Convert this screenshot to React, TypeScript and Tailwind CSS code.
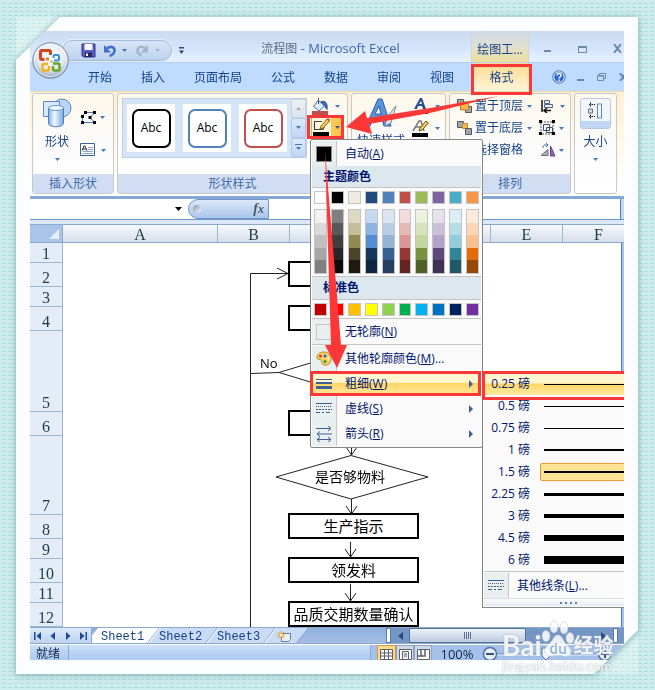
import React from "react";

const themeColumns = [
  ["#ffffff", "#f2f2f2", "#d9d9d9", "#bfbfbf", "#a6a6a6", "#7f7f7f"],
  ["#000000", "#7f7f7f", "#595959", "#3f3f3f", "#262626", "#0c0c0c"],
  ["#eeece1", "#ddd9c3", "#c4bd97", "#938953", "#494429", "#1d1b10"],
  ["#1f497d", "#c6d9f0", "#8db3e2", "#548dd4", "#17365d", "#0f243e"],
  ["#4f81bd", "#dbe5f1", "#b8cce4", "#95b3d7", "#366092", "#244061"],
  ["#c0504d", "#f2dcdb", "#e5b9b7", "#d99694", "#953734", "#632423"],
  ["#9bbb59", "#ebf1dd", "#d7e3bc", "#c3d69b", "#76923c", "#4f6128"],
  ["#8064a2", "#e5e0ec", "#ccc1d9", "#b2a2c7", "#5f497a", "#3f3151"],
  ["#4bacc6", "#dbeef3", "#b7dde8", "#92cddc", "#31859b", "#205867"],
  ["#f79646", "#fdeada", "#fbd5b5", "#fac08f", "#e36c09", "#974806"],
];
const standardColors = ["#c00000", "#ff0000", "#ffc000", "#ffff00", "#92d050", "#00b050", "#00b0f0", "#0070c0", "#002060", "#7030a0"];

const rows = [
  { n: 1, h: 20 }, { n: 2, h: 24 }, { n: 3, h: 20 }, { n: 4, h: 24 },
  { n: 5, h: 81 }, { n: 6, h: 24 }, { n: 7, h: 79 }, { n: 8, h: 24 },
  { n: 9, h: 20 }, { n: 10, h: 24 }, { n: 11, h: 20 }, { n: 12, h: 24 },
];

const weights = [
  { label: "0.25 磅", px: 1 }, { label: "0.5 磅", px: 1 }, { label: "0.75 磅", px: 1 },
  { label: "1 磅", px: 2 }, { label: "1.5 磅", px: 2 }, { label: "2.25 磅", px: 3 },
  { label: "3 磅", px: 4 }, { label: "4.5 磅", px: 6 }, { label: "6 磅", px: 8 },
];

function Caret({ color = "#4a78b5" }: { color?: string }) {
  return (
    <svg width="5" height="3" viewBox="0 0 5 3" className="shrink-0" aria-hidden="true">
      <path d="M0 0h5L2.500 3z" fill={color} />
    </svg>
  );
}

function OfficeButton() {
  return (
    <button aria-label="Office 按钮" className="absolute top-[11px] left-[2px] z-10 h-[37px] w-[37px]">
      <svg width="37" height="37" viewBox="0 0 37 37">
        <defs>
          <radialGradient id="orb" cx="50%" cy="35%" r="65%">
            <stop offset="0" stopColor="#ffffff" />
            <stop offset="0.65" stopColor="#e3e8f0" />
            <stop offset="1" stopColor="#8e9db5" />
          </radialGradient>
        </defs>
        <circle cx="18.5" cy="18.5" r="17.8" fill="url(#orb)" stroke="#7f8fa9" />
        <circle cx="18.5" cy="18.5" r="16.2" fill="none" stroke="#f6f8fb" strokeOpacity=".8" />
        <g fill="none">
          <path d="M12.500 17.500H10q-1.500 0-1.500-1.500V10q0-1.500 1.500-1.500h7q1.500 0 1.500 1.500v3" stroke="#d5441c" strokeWidth="3" />
          <path d="M22 18.500h3.500q1.500 0 1.500-1.500v-2.500q0-1.500-1.500-1.500H23q-1.500 0-1.500 1.500V16" stroke="#3b8edb" strokeWidth="2" />
          <path d="M16 22h-4q-1.500 0-1.500 1.500V27q0 1.500 1.500 1.500h3.500q1.500 0 1.500-1.500v-3" stroke="#f0b01e" strokeWidth="2.400" />
          <path d="M21 21.500h5q1.500 0 1.500 1.500v4q0 1.500-1.500 1.500h-3.500q-1.500 0-1.500-1.500v-3" stroke="#6aa728" strokeWidth="2.600" />
        </g>
        <path d="M14 15.500h3v3h-3z" fill="#ef7b2d" />
        <path d="M18.500 18.500h2v2h-2z" fill="#f29b3a" />
      </svg>
    </button>
  );
}

function TitleBar() {
  return (
    <header className="flex h-8 items-stretch border-b border-[#b4cef2] bg-linear-to-b from-[#ccdbf0] via-[#d3e3fa] to-[#e8f2ff]">
      <div className="flex w-[160px] shrink-0 items-center pt-[8px] pl-[32px]">
        <div className="flex h-[21px] w-[110px] items-center rounded-r-full rounded-tl-full border border-[#a3bbdb] bg-linear-to-b from-[#d7e5f7] to-[#bed2ee] pl-[18px] shadow-[0_0_0_1px_#e5effc]">
          <button aria-label="保存">
            <svg width="15" height="15" viewBox="0 0 15 15">
              <path d="M1 1h13v13H2.500L1 12.500z" fill="#5a5cc4" stroke="#32348e" />
              <path d="M3.500 1h8v6h-8z" fill="#f6f8ff" />
              <path d="M4 9.500h7V14H4z" fill="#23265e" />
              <path d="M5 10.500h2V13H5z" fill="#fff" />
            </svg>
          </button>
          <button aria-label="撤消" className="ml-[7px] flex items-center gap-[5px]">
            <svg width="14" height="14" viewBox="0 0 14 14">
              <path d="M3 5C6 2 11 2 11.500 6c.3 3-2 5-5 6" fill="none" stroke="#3f72c9" strokeWidth="2.600" />
              <path d="M1 1v7.500h7z" fill="#3f72c9" />
            </svg>
            <Caret />
          </button>
          <button aria-label="恢复" className="ml-[8px] flex items-center gap-[6px]">
            <svg width="14" height="14" viewBox="0 0 14 14">
              <path d="M11 5C8 2 3 2 2.500 6c-.3 3 1 4 4 5.500" fill="none" stroke="#a3b4cd" strokeWidth="2.400" />
              <path d="M13 1v7.500H6z" fill="#a3b4cd" />
            </svg>
            <Caret color="#a9b5c6" />
          </button>
        </div>
        <button aria-label="自定义快速访问工具栏" className="ml-[7px] shrink-0">
          <svg width="5" height="7" viewBox="0 0 5 7"><path d="M0 0h5v1.500H0zM0 3.500h5L2.500 7z" fill="#2b4878" /></svg>
        </button>
      </div>
      <h1 className="flex-1 pt-[9px] text-center text-[13px] leading-4 text-[#3e6aaa]">
        <span className="text-xs leading-4 text-[#5d6d84]">流程图</span> - Microsoft Excel
      </h1>
      <div className="w-[58px] shrink-0 border-x border-[#d5d6ce] bg-linear-to-b from-[#d0dcea] via-[#e0dfd0] to-[#efdf9b] pt-[11px] text-center text-xs leading-4 text-[#15428b]">绘图工...</div>
      <div className="flex w-[95px] shrink-0 pt-[9px] text-[#7288a8]">
        <button aria-label="最小化" className="flex w-[36px] shrink-0 justify-center pt-[10px]"><span className="h-0.5 w-[7px] bg-[#7288a8]" /></button>
        <button aria-label="最大化" className="flex w-[35px] shrink-0 justify-center pt-[6px]"><span className="h-[7px] w-[9px] border border-t-2 border-[#7288a8]" /></button>
        <button aria-label="关闭" className="flex w-[35px] shrink-0 justify-center pt-[4px]">
          <svg width="9" height="9" viewBox="0 0 9 9"><path d="M1 0l7 9M8 0L1 9" stroke="#6f87a9" strokeWidth="2" /></svg>
        </button>
      </div>
    </header>
  );
}

function RibbonTabs() {
  return (
    <nav className="flex h-7 items-stretch bg-[#bfdbff] pl-[58px] text-xs leading-4 text-[#15428b]">
      <div className="flex gap-[29px] pt-px">
        {["开始", "插入", "页面布局", "公式", "数据", "审阅", "视图"].map((t) => (
          <button key={t}>{t}</button>
        ))}
      </div>
      <button className="ml-[19px] w-[57px] rounded-t-sm bg-linear-to-b from-[#fbd98c] to-[#fff5d9] pt-px">格式</button>
      <div className="ml-auto flex w-[72px] shrink-0 items-center">
        <button aria-label="帮助" className="mr-[11px] shrink-0">
          <svg width="14" height="14" viewBox="0 0 14 14">
            <circle cx="7" cy="7" r="6.300" fill="#2b66cf" stroke="#6b8fc5" />
            <circle cx="7" cy="7" r="5.200" fill="none" stroke="#e9f2ff" />
            <path d="M5 5.500c0-2.700 4-2.500 4 0C9 7 7 7 7 8.500M7 9.500v1.500" fill="none" stroke="#fff" strokeWidth="1.500" />
          </svg>
        </button>
        <button aria-label="最小化窗口" className="mr-[13px] flex h-[7px] w-[7px] shrink-0 items-end"><span className="h-0.5 w-full bg-[#7288a8]" /></button>
        <button aria-label="还原窗口" className="mr-[13px] shrink-0">
          <svg width="9" height="8" viewBox="0 0 9 8"><path d="M2.500 2V.5h6v5H7M.5 2.500h6v5h-6zM.5 3h6" fill="none" stroke="#7288a8" /></svg>
        </button>
        <button aria-label="关闭窗口" className="shrink-0">
          <svg width="8" height="8" viewBox="0 0 8 8"><path d="M1 0l6 8M7 0L1 8" stroke="#6f87a9" strokeWidth="2" /></svg>
        </button>
      </div>
    </nav>
  );
}

function Group({ width, label, children }: { width: string; label?: string; children: React.ReactNode }) {
  return (
    <section className={`${width} flex h-[101px] shrink-0 flex-col overflow-hidden rounded-[3px] border border-[#c5c9ce] bg-linear-to-b from-[#fef8ea] via-[#fbfbfb] to-[#ffffff]`}>
      <div className="min-h-0 flex-1">{children}</div>
      {label !== undefined && (
        <h2 className="h-[19px] shrink-0 bg-linear-to-b from-[#d3def0] to-[#d0ddf4] text-center text-xs leading-[19px] text-[#3e6aaa]">{label}</h2>
      )}
    </section>
  );
}

function ArrangeIcon({ back }: { back?: boolean }) {
  return (
    <svg width="15" height="14" viewBox="0 0 15 14" aria-hidden="true">
      <path d="M.5.5h6v6h-6z" fill="#a3a7ad" stroke="#55595f" />
      {back && <path d="M5.500 2.500h5v5h-5z" fill="#f0b74c" stroke="#c98b23" />}
      <path d="M8.500 7.500h6v6h-6z" fill="#a3a7ad" stroke="#55595f" />
      {!back && <path d="M3.500 3h8v8h-8z" fill="#f6b746" stroke="#b98026" />}
    </svg>
  );
}

function Ribbon() {
  const styles = [
    { name: "黑色", cls: "border-black" },
    { name: "蓝色", cls: "border-[#4f81bd]" },
    { name: "红色", cls: "border-[#c0504d]" },
  ];
  return (
    <div className="flex h-[105px] gap-[3px] overflow-hidden border-t border-[#f0d9ae] bg-linear-to-b from-[#fff0d2] to-[#ffffff] pt-px pl-0.5 text-xs leading-4 text-[#15428b]">
      <Group width="w-[82px]" label="插入形状">
        <div className="flex pt-[4px] pl-[8px]">
          <button className="flex w-[32px] flex-col items-center">
            <svg width="30" height="30" viewBox="0 0 30 30">
              <defs>
                <linearGradient id="shape" x1="0" x2="1"><stop offset="0" stopColor="#82b1e4" /><stop offset=".4" stopColor="#f1f8ff" /><stop offset="1" stopColor="#76a8e0" /></linearGradient>
              </defs>
              <circle cx="20" cy="10" r="9" fill="#b8d5f5" stroke="#5a87bd" />
              <path d="M1.500 3.500h16v15h-16z" fill="#d9e9fb" stroke="#5a87bd" />
              <path d="M6.500 10v15c0 5 15 5 15 0V10" fill="url(#shape)" stroke="#4d7db9" />
              <ellipse cx="14" cy="10" rx="7.500" ry="2.500" fill="#edf6ff" stroke="#6b97cb" />
            </svg>
            <span className="mt-[6px]">形状</span>
            <span className="mt-[8px]"><Caret /></span>
          </button>
          <div className="ml-[7px] flex flex-col gap-[18px] pt-[12px]">
            <button aria-label="编辑形状" className="flex items-center gap-[3px]">
              <svg width="17" height="15" viewBox="0 0 17 15">
                <path d="M5.500 2.500h9L10 8l5 4.500H2.500V6z" fill="#fff" stroke="#4a78b5" />
                <path d="M4 1h3v3H4zM13 1h3v3h-3zM8.500 6h3v3h-3zM13 11h3v3h-3zM1 11h3v3H1zM1 5h3v3H1z" />
              </svg>
              <Caret />
            </button>
            <button aria-label="文本框" className="flex items-center gap-[5px]">
              <svg width="16" height="14" viewBox="0 0 16 14">
                <path d="M.5.500h14v12H.5z" fill="#fff" stroke="#3b6392" />
                <path d="M2 7.500L4 3h1l2 4.500M3 6h3" fill="none" stroke="#222" />
                <path d="M8 4.500h5M8 6.500h5M2.500 8.500H13M2.500 10.500H13" stroke="#86a7d5" />
              </svg>
              <Caret />
            </button>
          </div>
        </div>
      </Group>

      <Group width="w-[231px]" label="形状样式">
        <div className="flex pt-[4px] pl-[4px]">
          <div className="flex h-[60px] border border-[#b8cee9] bg-[#d5e5f8]">
            <div className="flex gap-[8px] px-[4px] pt-[5px]">
              {styles.map((s) => (
                <button key={s.name} aria-label={`Abc ${s.name}`} className="flex h-12 w-12 items-center justify-center bg-white">
                  <span className={`flex h-[39px] w-[39px] items-center justify-center rounded-[7px] border-2 text-black ${s.cls}`}>Abc</span>
                </button>
              ))}
            </div>
            <div className="flex w-[15px] flex-col">
              <button aria-label="上一行" className="flex flex-1 items-center justify-center border border-[#cbd3dc] bg-linear-to-b from-[#eef1f5] to-[#dce3eb]"><span className="rotate-180"><Caret color="#a6adb6" /></span></button>
              <button aria-label="下一行" className="flex flex-1 items-center justify-center rounded-xs border border-[#b1c8e8] bg-linear-to-b from-[#dbe9fb] to-[#c1d7f5]"><Caret /></button>
              <button aria-label="其他" className="flex flex-1 items-center justify-center rounded-xs border border-[#b1c8e8] bg-linear-to-b from-[#dbe9fb] to-[#c1d7f5]">
                <svg width="7" height="6" viewBox="0 0 7 6"><path d="M0 0h7v1H0zM1 3h5L3.500 6z" fill="#4a78b5" /></svg>
              </button>
            </div>
          </div>
          <div className="ml-[4px] flex flex-col gap-[2px]">
            <button aria-label="形状填充" className="flex items-center gap-[5px] pl-px">
              <svg width="18" height="17" viewBox="0 0 18 17">
                <path d="M6 2.500l7 5-6 5.500-5.500-4.500z" fill="#dceafa" stroke="#4a6f9f" />
                <path d="M6.500 0v6" stroke="#34598c" />
                <path d="M9 3.500c4-1 7 1 6 8-2-2-2-4-4-5z" fill="#3f6fb5" stroke="#34598c" />
                <path d="M0 13h16v4H0z" fill="#c0504d" />
              </svg>
              <Caret />
            </button>
            <button aria-label="形状轮廓" className="flex h-[20px] w-[33px] items-center gap-[4px] border border-[#d9ac53] bg-linear-to-r from-[#fff8df] from-60% to-[#fec850] to-62%">
              <svg width="19" height="18" viewBox="0 0 19 18">
                <path d="M10 3.500H2.500v8H11l2-5" fill="none" stroke="#444" strokeWidth="1.200" />
                <path d="M8 11l1-3 6-7 2.500 2-6.500 7z" fill="#f4cd57" stroke="#8a641e" />
                <path d="M15 1l2.500 2 .8-1.200L16 .2z" fill="#c24a49" />
                <path d="M1 14h16v4H1z" />
              </svg>
              <Caret color="#30598e" />
            </button>
          </div>
        </div>
      </Group>

      <Group width="w-[95px]">
        <div className="flex pt-[3px] pl-[4px]">
          <button className="flex w-[50px] flex-col items-center">
            <svg width="34" height="33" viewBox="0 0 34 33">
              <path d="M2 29L14 2h4l9 27h-7l-2-7h-9l-3 7zM11 17h6l-2-8z" fill="#5893dc" stroke="#2b64ac" />
              <path d="M32 9L23 20l-2 9 6-3z" fill="#e4e8ec" stroke="#7f8992" />
            </svg>
            <span className="mt-[3px] whitespace-nowrap">快速样式</span>
          </button>
          <div className="ml-[6px] flex flex-col gap-[4px]">
            <button aria-label="文本填充" className="flex items-center gap-[5px]">
              <svg width="18" height="18" viewBox="0 0 18 18"><path d="M2 12L8 1h2l4 11h-3l-1-3H6l-1 3zM7 7h3L9 4z" fill="#294f8f" /><path d="M0 14h16v3H0z" /></svg>
              <Caret />
            </button>
            <button aria-label="文本轮廓" className="flex items-center gap-[5px]">
              <svg width="18" height="18" viewBox="0 0 18 18">
                <path d="M1 12L7 2h2l3 10M4 8h6" fill="none" stroke="#777" strokeWidth="1.500" />
                <path d="M7 12l1-3 6-7 2.500 2-6.500 7z" fill="#f4cd57" stroke="#70511b" /><path d="M0 14h16v4H0z" />
              </svg>
              <Caret />
            </button>
          </div>
        </div>
      </Group>

      <Group width="w-[122px]" label="排列">
        <div className="flex flex-col gap-[6px] pt-[4px] pl-[7px]">
          <div className="flex items-center">
            <button className="flex items-center gap-[3px]"><ArrangeIcon />置于顶层<span className="ml-[1px]"><Caret /></span></button>
            <button aria-label="对齐" className="ml-[9px] flex items-center gap-[5px]">
              <svg width="14" height="14" viewBox="0 0 14 14"><path d="M1 1v12M4 11.500h6M6 9l-3 2.500L6 14" fill="none" stroke="#111" strokeWidth="1.500" /><path d="M3.500 1.500h5v3h-5zM3.500 5.500h8v3h-8z" fill="#e4edf8" stroke="#56667a" /></svg>
              <Caret />
            </button>
          </div>
          <div className="flex items-center">
            <button className="flex items-center gap-[3px]"><ArrangeIcon back />置于底层<span className="ml-[1px]"><Caret /></span></button>
            <button aria-label="组合" className="ml-[7px] flex items-center gap-[3px]">
              <svg width="17" height="16" viewBox="0 0 17 16"><path d="M2 2h12v12H2z" fill="none" stroke="#555" strokeDasharray="2 1" /><path d="M4.500 4.500h6v6h-6zM7.500 7.500h6v5h-6z" fill="none" stroke="#3a4f77" /><path d="M0 0h3v3H0zM13 0h3v3h-3zM0 12h3v3H0zM13 12h3v3h-3z" /></svg>
              <Caret />
            </button>
          </div>
          <div className="flex items-center">
            <button className="pl-[18px]">选择窗格</button>
            <button aria-label="旋转" className="ml-[17px] flex items-center gap-[3px]">
              <svg width="16" height="14" viewBox="0 0 16 14"><path d="M1 12.500h7v-6z" fill="#a9b2bc" stroke="#66717e" /><path d="M10.500 3v10H15z" fill="#8e67b5" stroke="#614087" /><path d="M3 5c0-3 2-3.500 4-3M6 0l2 2-2 2" fill="none" stroke="#3a6dae" /></svg>
              <Caret />
            </button>
          </div>
        </div>
      </Group>

      <Group width="w-[43px]">
        <button className="flex w-full flex-col items-center pt-[4px]">
          <span className="flex h-[31px] w-[31px] justify-center rounded-[3px] border border-[#b3c7e2] bg-linear-to-b from-[#f1f6fd] from-75% to-[#c0d7f3] to-76% pt-[2px]">
            <svg width="17" height="19" viewBox="0 0 17 19"><path d="M10.500 3h4v14h-4z" fill="#f4f9ff" stroke="#5c85b8" /><path d="M1.500 8h4v4h-4z" fill="#dbe0e5" stroke="#66717e" /><path d="M2 3.500h6M2 15.500h6M3.500 1.500v4M3.500 13.500v4" stroke="#111" strokeDasharray="1.500 1" /></svg>
          </span>
          <span className="mt-[5px]">大小</span>
          <span className="mt-[8px]"><Caret /></span>
        </button>
      </Group>
    </div>
  );
}

function FormulaBar() {
  return (
    <div className="border-t-[3px] border-[#85a9d6]">
      <div className="flex h-[25px] flex-col bg-[#dbe8fa]">
        <div className="flex h-[21px] border-b border-[#6c96c5] bg-white">
          <div className="flex w-[158px] shrink-0 items-center">
            <input aria-label="名称框" className="w-[145px] outline-none" />
            <button aria-label="名称列表"><svg width="7" height="4" viewBox="0 0 7 4"><path d="M0 0h7L3.500 4z" /></svg></button>
          </div>
          <div className="flex w-[81px] shrink-0 items-center justify-between rounded-l-full border border-[#7297c4] bg-linear-to-b from-[#dce8f8] to-[#a9c5ec] px-[4px]">
            <span className="h-2 w-2 rounded-full bg-linear-to-br from-[#8d99a8] to-[#f4f7fa]" />
            <button aria-label="插入函数" className="font-['Liberation_Serif',serif] text-sm leading-4 font-bold text-[#4c5866] italic">f<span className="text-xs">x</span></button>
          </div>
          <input aria-label="编辑栏" className="min-w-0 flex-1 outline-none" />
          <button aria-label="展开编辑栏" className="w-[4px] border-l border-[#5579a9] bg-[#c4d8f2]" />
        </div>
      </div>
    </div>
  );
}

function Node({ pos, children }: { pos: string; children?: React.ReactNode }) {
  return (
    <div className={`${pos} absolute left-[225px] flex h-[26px] w-[131px] items-center justify-center border-2 border-black bg-white pt-0.5 text-[15px] leading-5 whitespace-nowrap text-black`}>
      {children}
    </div>
  );
}

function Sheet() {
  const head = "shrink-0 border-r border-[#9eb6ce] text-center";
  return (
    <div className="font-['Liberation_Serif','Noto_Sans_CJK_SC',serif] text-base text-[#1d3c3f]">
      <div className="flex h-[19px] border-y border-[#8ba9cd] bg-linear-to-b from-[#f6f9fc] to-[#d6dfeb] leading-[19px]">
        <button aria-label="全选" className="flex w-[33px] shrink-0 items-end justify-end border-r border-[#8ba9cd] bg-[#a9c4e9] p-[3px]">
          <svg width="10" height="10" viewBox="0 0 10 10"><path d="M10 0v10H0z" fill="#e8eef7" /></svg>
        </button>
        <div className={`${head} w-[155px]`}>A</div>
        <div className={`${head} w-[72px]`}>B</div>
        <div className={`${head} w-[100px]`}>C</div>
        <div className={`${head} w-[101px]`}>D</div>
        <div className={`${head} w-[72px]`}>E</div>
        <div className={`${head} w-[72px]`}>F</div>
      </div>
      <div className="flex">
        <div className="w-[33px] shrink-0 border-r border-[#9eb6ce] bg-[#e4ecf7]">
          {rows.map((r) => (
            <div key={r.n} className="flex items-end justify-center border-b border-[#9eb6ce] leading-[17px]" style={{ height: r.h }}>{r.n}</div>
          ))}
        </div>
        <div className="relative min-w-0 flex-1 overflow-hidden bg-white">
          <svg width="380" height="384" viewBox="63 243 380 384" className="absolute top-0 left-0" fill="none" stroke="#222">
            <path d="M288 273.500H250.500V627M277 268l11 5.500L277 279" />
            <path d="M251 373.500l28-1 33-10M279 372.500l33 10" />
            <path d="M276 477l75-21.500 77 21.500-77 22z" />
            <path d="M351.500 440v15M346 447l5.500 8 5.500-8M351.500 499v15M346 506l5.500 8 5.500-8M350.500 542v15M345 549l5.500 8 5.500-8M350.500 584v17M345 593l5.500 8 5.500-8" />
          </svg>
          <span className="absolute top-[112px] left-[197px] font-['Open_Sans',sans-serif] text-[13px] leading-4 text-black">No</span>
          <span className="absolute top-[225px] left-[252px] text-sm leading-5 text-black">是否够物料</span>
          <Node pos="top-[18px]" />
          <Node pos="top-[62px]" />
          <Node pos="top-[167px]" />
          <Node pos="top-[270px]">生产指示</Node>
          <Node pos="top-[314px]">领发料</Node>
          <Node pos="top-[358px]">品质交期数量确认</Node>
        </div>
        <div className="w-[3px] shrink-0 border-l border-[#5b7dad] bg-[#a7c3ea]" />
      </div>
    </div>
  );
}

function SheetTabs() {
  const nav = [
    ["第一张", "M0 0h1.500v8H0zM7 0v8L2.500 4z"],
    ["上一张", "M6 0v8L1.500 4z"],
    ["下一张", "M1 0v8l4.500-4z"],
    ["最后一张", "M0 0v8l4.500-4zM5.500 0H7v8H5.500z"],
  ];
  const tab = "relative h-full shrink-0 pt-[2px] text-left before:absolute before:inset-0 before:-skew-x-[38deg] before:border-r before:border-[#7c9cc8]";
  return (
    <div className="flex h-[17px] border-y border-[#8aa8d0] bg-linear-to-b from-[#8fafdc] to-[#a4bfe3] font-['Liberation_Mono',monospace] text-xs leading-[14px] text-[#15428b]">
      <div className="relative z-10 flex w-[62px] shrink-0 items-center justify-around border-r border-[#8aa8d0] bg-linear-to-b from-[#dfeafa] to-[#bcd3f2]">
        {nav.map(([n, d]) => (
          <button key={n} aria-label={n}><svg width="7" height="8" viewBox="0 0 7 8"><path d={d} fill="#1c4b93" /></svg></button>
        ))}
      </div>
      <button className={`${tab} w-[62px] pl-[9px] before:bg-white`}><span className="relative">Sheet1</span></button>
      <button className={`${tab} w-[58px] pl-[5px] before:border-l before:border-l-white before:bg-[#c9dbf5]`}><span className="relative">Sheet2</span></button>
      <button className={`${tab} w-[58px] pl-[5px] before:border-l before:border-l-white before:bg-[#c9dbf5]`}><span className="relative">Sheet3</span></button>
      <button aria-label="插入工作表" className={`${tab} w-[33px] pl-[7px] before:border-l before:border-l-white before:bg-[#c9dbf5]`}>
        <svg width="15" height="12" viewBox="0 0 15 12" className="relative"><path d="M4.500 2.500h9v6l-2 2h-7z" fill="#e9eef6" stroke="#6d7f99" /><path d="M4 0v8M0 4h8M1 1l6 6M7 1L1 7" stroke="#eb9626" /><circle cx="4" cy="4" r="1.500" fill="#fff3b0" /></svg>
      </button>
      <div className="ml-auto flex w-[238px] shrink-0 items-stretch bg-[#7496c5]">
        <span className="mr-[7px] w-[5px] border border-[#5b7dad] bg-white" />
        <button aria-label="向左滚动" className="w-[8px]"><svg width="5" height="8" viewBox="0 0 5 8"><path d="M5 0v8L0 4z" fill="#294a7d" /></svg></button>
        <div className="mx-[3px] flex w-[117px] items-center justify-center gap-px rounded-xs border border-[#567096] bg-linear-to-b from-[#edf2f9] to-[#bccbe0]">
          {[0, 1, 2, 3].map((i) => <span key={i} className="h-[7px] w-px bg-[#60718c]" />)}
        </div>
        <button aria-label="向右滚动" className="mr-[7px] ml-auto"><svg width="5" height="8" viewBox="0 0 5 8"><path d="M0 0v8l5-4z" fill="#294a7d" /></svg></button>
        <span className="mr-[6px] w-[5px] border border-[#5b7dad] bg-white" />
      </div>
    </div>
  );
}

function StatusBar() {
  return (
    <footer className="flex h-4 items-start overflow-hidden border-t border-white bg-linear-to-b from-[#cfe1f9] via-[#b8d2f5] to-[#adcaf1] text-xs leading-[18px] text-[#15284b]">
      <span className="w-[39px] shrink-0 border-r border-[#89a9d4] pl-[6px]">就绪</span>
      <div className="ml-auto flex h-full w-[254px] items-start border-l border-[#89a9d4] bg-[#a4c1ea] pl-[6px]">
        {["普通", "页面布局", "分页预览"].map((v, i) => (
          <button key={v} aria-label={v} className={i === 0 ? "h-4 w-[19px] border border-[#d39b42] bg-[#ffd889] pt-[3px] pl-[2px]" : "h-4 w-[18px] border border-[#8ba4c6] bg-[#cfd9e6] pt-[3px] pl-[2px]"}>
            <svg width="13" height="11" viewBox="0 0 13 11">
              <path d="M.5.500h12v10H.5z" fill="#fff" stroke="#59616c" />
              {i === 0 && <path d="M0 4h13M0 7h13M4.500 0v11M8.500 0v11" stroke="#59616c" />}
              {i === 1 && <path d="M3.500 2.500h6v8h-6zM5 5h3M5 7h3" fill="#eee" stroke="#59616c" />}
              {i === 2 && <path d="M4 0v7H0M8 0v7H4" fill="none" stroke="#59616c" strokeWidth="1.500" />}
            </svg>
          </button>
        ))}
        <button className="ml-[7px] w-[36px] text-[13px] leading-[18px]">100%</button>
        <svg width="130" height="16" viewBox="0 0 130 16" className="ml-[6px] shrink-0" aria-hidden="true">
          <path d="M16 9h104" stroke="#5b7dad" /><path d="M16 10h104" stroke="#e8f1fd" />
          <circle cx="9" cy="9" r="6.500" fill="#e7eefa" stroke="#54739f" strokeWidth="1.500" /><path d="M5 9h8" stroke="#38557f" strokeWidth="2" />
          <path d="M61 3h8v8l-4 4-4-4z" fill="#f4f7fc" stroke="#54739f" />
          <circle cx="124" cy="9" r="6.500" fill="#e7eefa" stroke="#54739f" strokeWidth="1.500" /><path d="M120 9h8M124 5v8" stroke="#38557f" strokeWidth="2" />
        </svg>
      </div>
    </footer>
  );
}

function Swatch({ color }: { color: string }) {
  return <button aria-label={color} className="h-[13px] w-[13px] border border-[#c4c4c4]" style={{ backgroundColor: color }} />;
}

function DashIcon() {
  return (
    <svg width="16" height="12" viewBox="0 0 16 12" aria-hidden="true" stroke="#3f5f95">
      <path d="M0 .5h16" /><path d="M0 3.500h16" strokeDasharray="1 1" /><path d="M0 6.500h16" strokeDasharray="2 1" /><path d="M0 9.500h16" strokeDasharray="4 2 2 2" />
    </svg>
  );
}

function MenuRow({ icon, text, k, tail = "", sub, active }: { icon: React.ReactNode; text: string; k: string; tail?: string; sub?: boolean; active?: boolean }) {
  return (
    <button role="menuitem" className={`flex h-[25px] w-full items-center text-left ${active ? "bg-linear-to-b from-[#fff6cf] from-45% via-[#ffd666] via-50% to-[#ffe99d]" : ""}`}>
      <span className={`flex h-full w-[25px] shrink-0 items-center justify-center pr-px ${active ? "" : "border-r border-[#c5c5c5] bg-[#e9eeee]"}`}>{icon}</span>
      <span className="flex-1 pl-[8px] whitespace-nowrap">{text}(<u>{k}</u>){tail}</span>
      {sub && <svg width="4" height="8" viewBox="0 0 4 8" className="mr-[8px]"><path d="M0 0v8l4-4z" fill="#3f5f95" /></svg>}
    </button>
  );
}

function OutlineMenu() {
  const section = "bg-[#dde7ee] pl-[11px] leading-[22px] font-bold";
  return (
    <div role="menu" className="absolute top-[108px] left-[280px] z-20 w-[173px] rounded-[2px] border border-[#868686] bg-[#fafafa] p-px text-xs leading-4 text-[#00156e]">
      <MenuRow text="自动" k="A" icon={<span className="h-4 w-4 border border-[#888] bg-black" />} />
      <h3 className={`h-[21px] ${section}`}>主题颜色</h3>
      <div className="border-y border-[#c5c5c5] px-[2px] pt-[3px] pb-[2px]">
        <div className="flex gap-[4px]">{themeColumns.map((c) => <Swatch key={c[0]} color={c[0]} />)}</div>
        <div className="mt-[5px] flex gap-[4px]">
          {themeColumns.map((c) => (
            <div key={c[0]} className="flex h-[65px] w-[13px] flex-col border border-[#c4c4c4]">
              {c.slice(1).map((t) => <button key={t} aria-label={t} className="w-full flex-1" style={{ backgroundColor: t }} />)}
            </div>
          ))}
        </div>
      </div>
      <h3 className={`h-[22px] ${section}`}>标准色</h3>
      <div className="flex gap-[4px] border-y border-[#c5c5c5] px-[2px] pt-[3px] pb-[2px]">{standardColors.map((c) => <Swatch key={c} color={c} />)}</div>
      <MenuRow text="无轮廓" k="N" icon={<span className="h-4 w-4 border border-[#c5c5c5]" />} />
      <div className="border-t border-[#c5c5c5] pt-px">
        <MenuRow text="其他轮廓颜色" k="M" tail="..." icon={
          <svg width="16" height="16" viewBox="0 0 16 16">
            <path d="M8 1C3 1 .5 4 1 7c.5 2 3 1 4 2s0 4 3 5c4 1 7-2 7-6S12 1 8 1z" fill="#f7d166" stroke="#b98a2b" />
            <circle cx="4.500" cy="5" r="1.500" fill="#d9362b" /><circle cx="9" cy="5" r="1.500" fill="#2f62c4" /><circle cx="9" cy="10.500" r="1.600" fill="#3c9b3a" /><circle cx="12.500" cy="7.500" r="1.200" fill="#fdf3c8" />
          </svg>} />
        <MenuRow text="粗细" k="W" sub active icon={<svg width="16" height="12" viewBox="0 0 16 12"><path d="M0 1h16v1H0zM0 4h16v2H0zM0 8h16v3H0z" fill="#3f5f95" /></svg>} />
        <MenuRow text="虚线" k="S" sub icon={<DashIcon />} />
        <MenuRow text="箭头" k="R" sub icon={
          <svg width="16" height="16" viewBox="0 0 16 16" fill="none" stroke="#3f5f95"><path d="M0 2.500h14M12 0l3 2.500L12 5M16 8H2M4 5.500L1 8l3 2.500M1 13.500h14M4 11l-3 2.500L4 16M12 11l3 2.500-3 2.500" /></svg>} />
      </div>
    </div>
  );
}

function WeightMenu() {
  return (
    <div role="menu" className="absolute top-[340px] left-[452px] z-20 w-[172px] border border-[#868686] bg-[#fafafa] p-px text-xs leading-4 text-[#00156e]">
      {weights.map((w, i) => (
        <button role="menuitem" key={w.label} className={`flex h-[22px] w-full items-center ${i === 0 ? "bg-linear-to-b from-[#fff6cf] from-45% via-[#ffd666] via-50% to-[#ffe99d]" : ""}`}>
          <span className="w-[46px] shrink-0 text-right whitespace-nowrap">{w.label}</span>
          <span className={`ml-[10px] flex h-[18px] flex-1 items-center pl-[3px] ${i === 4 ? "rounded-xs border border-[#f29536] bg-[#ffe294]" : "border border-transparent"}`}>
            <span className="w-full bg-black" style={{ height: w.px }} />
          </span>
        </button>
      ))}
      <div className="border-t border-[#c5c5c5] pt-px">
        <MenuRow text="其他线条" k="L" tail="..." icon={<DashIcon />} />
      </div>
      <div className="flex h-[8px] items-center justify-center gap-[3px] border-t border-[#d5dde8] bg-linear-to-b from-[#fbfcfd] to-[#e4ebf2]">
        {[0, 1, 2, 3].map((i) => <span key={i} className="h-0.5 w-0.5 bg-[#5f7ba9]" />)}
      </div>
    </div>
  );
}

function Annotations() {
  return (
    <svg width="594" height="629" viewBox="30 31 594 629" className="pointer-events-none absolute top-0 left-0 z-30" aria-hidden="true">
      <g fill="none" stroke="#fb3737" strokeWidth="3">
        <path d="M472.500 65.500h58v28h-58zM308.500 116.500h34v21h-34zM311.500 372.500h168v22h-168zM640 372.500H483.500v26H640" />
      </g>
      <path d="M499 96L430 108l-63 10-2-7-19 16 26 7-3-10 61-11z" fill="#fb3737" />
      <path d="M325 150l6 195h-6l12 23 10-23h-6z" fill="#fb3737" />
    </svg>
  );
}

function Watermark() {
  return (
    <div className="pointer-events-none absolute right-[21px] bottom-0 z-40 w-[115px] font-['Lato','Noto_Sans_CJK_SC',sans-serif] text-white/85 [text-shadow:0_0_2px_#a0aab4]">
      <div className="flex items-end">
        <span className="text-[28px] leading-[26px] font-bold">Bai</span>
        <svg width="32" height="38" viewBox="0 0 32 38" className="shrink-0" fill="#ffffff" fillOpacity=".85" stroke="#b9c2ca" strokeWidth=".6">
          <ellipse cx="12" cy="7" rx="4" ry="6" /><ellipse cx="22" cy="8" rx="4" ry="6" /><ellipse cx="4" cy="16" rx="4" ry="5.500" /><ellipse cx="28" cy="18" rx="4" ry="5.500" />
          <path d="M16 15c-4 0-5 5-8 8s-6 5-5 9 5 5 8 4 6-1 10 0 8 0 8-4-3-6-5-8-4-9-8-9z" />
          <path d="M12 26c-4 0-4 7 0 7h2V23M18 26v5q0 2 2 2h3v-7" fill="none" stroke="#8eb0da" strokeWidth="1.600" />
        </svg>
        <span className="text-[20px] leading-[26px] font-bold whitespace-nowrap">经验</span>
      </div>
      <div className="text-sm leading-4 whitespace-nowrap">jingyan.baidu.com</div>
    </div>
  );
}

export default function App() {
  return (
    <main className="min-h-screen bg-[#cdecec] bg-[repeating-linear-gradient(90deg,#cdecec_0_2px,transparent_2px_6px),repeating-linear-gradient(0deg,transparent_0_3px,#a9dedd_3px_4px)] pt-[17px] pr-[17px] pb-[17px] pl-4 font-['Open_Sans','Noto_Sans_CJK_SC',sans-serif]">
      <div className="relative bg-white/30">
        <div className="drop-shadow-[0_1px_3px_#7fa9a9]">
          <div className="bg-[#fcfdfe] p-[14px] [clip-path:polygon(44px_0,100%_0,100%_calc(100%-44px),calc(100%-44px)_100%,0_100%,0_43px)]">
            <div className="relative overflow-hidden">
              <TitleBar />
              <RibbonTabs />
              <OfficeButton />
              <Ribbon />
              <FormulaBar />
              <Sheet />
              <SheetTabs />
              <StatusBar />
              <OutlineMenu />
              <WeightMenu />
              <Annotations />
            </div>
          </div>
        </div>
        <Watermark />
      </div>
    </main>
  );
}
